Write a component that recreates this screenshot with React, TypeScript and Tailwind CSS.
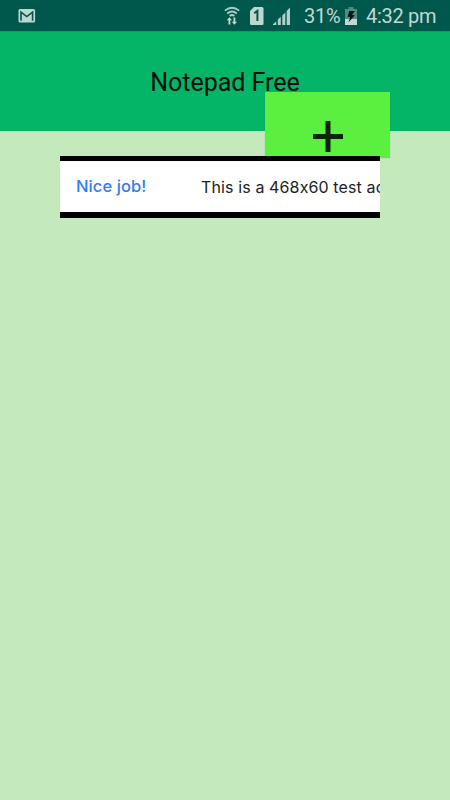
function MailIcon() {
  return (
    <svg className="ml-[18px] h-4 w-[18px] shrink-0" viewBox="0 0 18 16">
      <rect x="0.5" y="1" width="16.6" height="13.6" rx="1.6" fill="#bfd6d1" />
      <path d="M3 12.8V4.2L8.8 8.6L14.6 4.2V12.8" fill="none" stroke="#00574b" strokeWidth="1.6" />
    </svg>
  );
}

function WifiIcon() {
  return (
    <svg className="h-[20px] w-[16px] shrink-0" viewBox="0 0 16 20">
      <g fill="none" stroke="#a9cbc4" strokeWidth="1.8">
        <path d="M0.8 4.6Q8 -1.2 15.2 4.6" />
        <path d="M3.2 7.5Q8 3.5 12.8 7.5" />
        <path d="M5.6 10Q8 8 10.4 10" />
      </g>
      <path d="M5.4 11.2L8 14.2H6.3V18.6H4.5V14.2H2.8ZM10.4 18.8L7.8 15.8H9.5V11.4H11.3V15.8H13Z" fill="#c5dad5" />
    </svg>
  );
}

function SimIcon() {
  return (
    <svg className="ml-[10px] h-[18px] w-[14px] shrink-0" viewBox="0 0 14 18">
      <path d="M4 0H12Q13.5 0 13.5 1.5V16.5Q13.5 18 12 18H1.5Q0 18 0 16.5V4Z" fill="#bfd6d1" />
      <path d="M4.2 6.2L7.4 4V14" fill="none" stroke="#00574b" strokeWidth="2" />
    </svg>
  );
}

function SignalIcon() {
  return (
    <svg className="ml-[9px] h-[18px] w-[18px] shrink-0" viewBox="0 0 18 18">
      <path d="M0 17.2L3.2 14.5V18H0ZM4.8 12.5L7.8 9.8V18H4.8ZM9.3 8.5L12.3 5.5V18H9.3ZM13.7 4L17 0.5V18H13.7Z" fill="#b3d0ca" />
    </svg>
  );
}

function BatteryIcon() {
  return (
    <svg className="h-[18px] w-[12px] shrink-0" viewBox="0 0 12 18">
      <path d="M3.5 0H8.5V2H12V12H0V2H3.5Z" fill="#528b82" />
      <path d="M0 12H12V18H0Z" fill="#c3d8d4" />
      <path d="M4.3 4L2.5 9.7L5.3 9.9L3.4 15.5L9.8 8.3L6.9 7.7L10 4Z" fill="#071a16" />
    </svg>
  );
}

export default function App() {
  return (
    <div className="h-[800px] w-[450px] overflow-hidden bg-[#c4e9bc] font-[Roboto,sans-serif]">
      <div className="flex h-[31px] items-center bg-[#00574b] text-[#c2d8d3]">
        <MailIcon />
        <div className="ml-[188px] flex w-[80px] items-center">
          <WifiIcon />
          <SimIcon />
          <SignalIcon />
        </div>
        <span className="w-[37px] pt-[2px] text-[20px] leading-[29px] tracking-[-0.2px] whitespace-nowrap">31%</span>
        <div className="ml-[4px] pt-px"><BatteryIcon /></div>
        <span className="ml-[9px] pt-[2px] text-[20px] leading-[29px] tracking-[-0.3px] whitespace-nowrap">4:32 pm</span>
      </div>

      <header className="relative flex h-[100px] justify-center border-t border-[#03a05f] bg-[#04b568]">
        <h1 className="pt-[35px] text-[25px] leading-8 whitespace-nowrap text-[#00100a]">Notepad Free</h1>
        <button
          aria-label="Add note"
          className="absolute top-[59.5px] left-[265px] flex h-[65px] w-[125px] justify-center bg-[#5bef40] pt-[29px] shadow-[0_1px_1px_rgba(0,0,0,0.2)]"
        >
          <svg className="h-[32px] w-[30px]" viewBox="0 0 30 32">
            <path d="M12.5 0H17.5V13H30V18H17.5V31H12.5V18H0V13H12.5Z" fill="#0c240a" />
          </svg>
        </button>
      </header>

      <section className="relative mt-[25px] ml-[60px] flex h-[62px] w-[320px] items-center overflow-hidden border-t-[5px] border-b-[6px] border-black bg-white font-[Inter,sans-serif] text-[16px] whitespace-nowrap [font-feature-settings:'calt'_0]">
        <span className="ml-4 w-[125px] shrink-0 text-[16.5px] font-medium tracking-[0.1px] text-[#2f7cf6]">Nice job!</span>
        <span className="shrink-0 tracking-[0.12px] text-[#202124]">This is a 468x60 test ad</span>
      </section>
    </div>
  );
}
